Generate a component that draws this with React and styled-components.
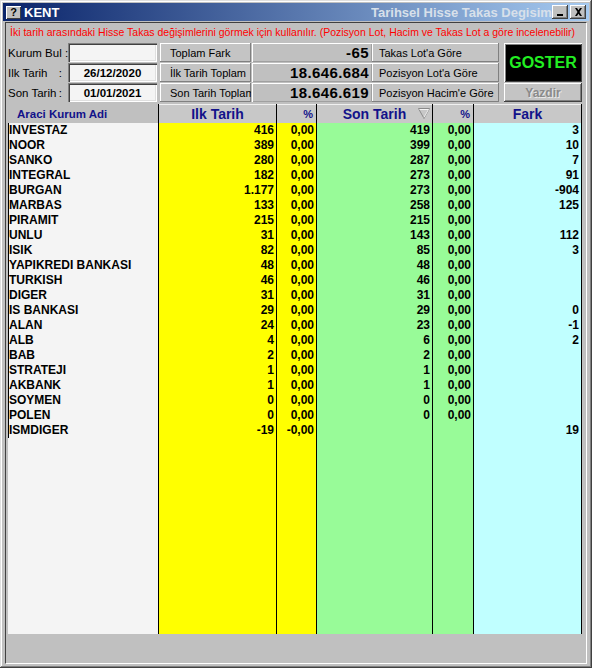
import React from 'react';
import styled, { createGlobalStyle } from 'styled-components';

const GlobalStyle = createGlobalStyle`
  html, body { margin: 0; padding: 0; background: #c0c0c0; }
  body { font-family: "Liberation Sans", Arial, sans-serif; }
  * { box-sizing: border-box; }
`;

const raised = 'inset -1px -1px #808080, inset 1px 1px #ffffff';
const sunken = 'inset 1px 1px #808080, inset 2px 2px #404040, inset -1px -1px #ffffff, inset -2px -2px #dfdfdf';

const Window = styled.div`
  width: 592px;
  height: 668px;
  padding: 3px;
  background: #c0c0c0;
  box-shadow: inset -1px -1px #404040, inset 1px 1px #dfdfdf, inset -2px -2px #808080, inset 2px 2px #ffffff;
  display: flex;
  flex-direction: column;
  overflow: hidden;
`;

const TitleBar = styled.div`
  height: 18px;
  flex: none;
  background: linear-gradient(to right, #0a246a, #a6caf0);
  display: flex;
  align-items: center;
  padding: 0 3px 0 3px;
  margin-bottom: 1px;
`;

const TitleIcon = styled.span`
  width: 15px;
  height: 13px;
  background: #c0c0c0;
  box-shadow: inset 1px 1px #ffffff, inset -1px -1px #404040;
  display: flex;
  align-items: center;
  justify-content: center;
  font: bold 11px "Liberation Sans", Arial, sans-serif;
  color: #000;
`;

const Caption = styled.span`
  margin-left: 3px;
  color: #ffffff;
  font: bold 13px "Liberation Sans", Arial, sans-serif;
`;

const SubCaption = styled.span`
  margin-left: auto;
  width: 181px;
  overflow: hidden;
  white-space: nowrap;
  color: #d8e0ea;
  font: bold 13px "Liberation Sans", Arial, sans-serif;
`;

const CapButton = styled.span`
  width: 16px;
  height: 14px;
  margin-left: ${p => p.$gap || 0}px;
  background: #c0c0c0;
  box-shadow: inset -1px -1px #404040, inset 1px 1px #ffffff, inset -2px -2px #808080;
  display: flex;
  align-items: center;
  justify-content: center;
`;

const Client = styled.div`
  flex: 1;
  display: flex;
  flex-direction: column;
  margin: 0 2px 1px 2px;
  border-style: solid;
  border-width: 1px;
  border-color: #404040 #ffffff #ffffff #404040;
  padding: 0 3px 0 2px;
`;

const Notice = styled.div`
  height: 20px;
  line-height: 19px;
  padding-left: 2px;
  color: #ff0000;
  font-size: 10.5px;
  white-space: nowrap;
  overflow: hidden;
`;

const Controls = styled.div`
  display: grid;
  grid-template-columns: 60px 92px 92px 120px 128px 82px;
  grid-template-rows: repeat(3, 19px);
  row-gap: 1px;
`;

const Label = styled.div`
  display: flex;
  align-items: center;
  justify-content: space-between;
  width: ${p => p.$w}px;
  font-size: 11.5px;
  color: #000;
  white-space: nowrap;
`;

const Input = styled.div`
  width: 89px;
  height: 19px;
  background: #f4f4f4;
  box-shadow: ${sunken};
  display: flex;
  align-items: center;
  justify-content: center;
  font: bold 11.5px "Liberation Sans", Arial, sans-serif;
  padding-top: 1px;
`;

const Button = styled.div`
  width: ${p => p.$w}px;
  height: 19px;
  background: #c4c4c4;
  box-shadow: ${raised};
  display: flex;
  align-items: center;
  padding-left: ${p => p.$pl}px;
  font-size: 11px;
  color: #000;
  white-space: nowrap;
  overflow: hidden;
`;

const Value = styled.div`
  height: 19px;
  background: #c0c0c0;
  box-shadow: inset 1px 1px #ffffff, inset -1px -1px #a0a0a0;
  display: flex;
  align-items: center;
  justify-content: flex-end;
  padding-right: 3px;
  font: bold 15px "Liberation Sans", Arial, sans-serif;
  letter-spacing: 0.4px;
  color: #000;
`;

const GoButton = styled.div`
  grid-column: 6;
  grid-row: 1 / span 2;
  margin-left: 4px;
  background: #000;
  box-shadow: inset 1px 1px #ffffff, inset -1px -1px #404040, inset 2px 2px #808080;
  display: flex;
  align-items: center;
  justify-content: center;
  color: #22ee22;
  font: bold 16px "Liberation Sans", Arial, sans-serif;
`;

const PrintButton = styled.div`
  grid-column: 6;
  grid-row: 3;
  margin-left: 4px;
  background: #c4c4c4;
  box-shadow: inset -1px -1px #404040, inset 1px 1px #ffffff, inset -2px -2px #808080;
  display: flex;
  align-items: center;
  justify-content: center;
  color: #8a8a8a;
  font: bold 12px "Liberation Sans", Arial, sans-serif;
  text-shadow: 1px 1px #e8e8e8;
`;

const Grid = styled.div`
  margin-top: 2px;
  display: flex;
  flex-direction: column;
`;

const HeaderRow = styled.div`
  display: flex;
  height: 19px;
`;

const HeaderCell = styled.div`
  position: relative;
  width: ${p => p.$w}px;
  flex: none;
  border-right: 1px solid #000;
  background: ${p => (p.$flat ? '#c0c0c0' : '#c8c8c8')};
  box-shadow: ${p => (p.$flat ? 'none' : 'inset 0 1px #f0f0f0')};
  display: flex;
  align-items: center;
  justify-content: ${p => p.$justify};
  padding: ${p => p.$pad};
  color: #12128a;
  font: bold ${p => p.$fs}px "Liberation Sans", Arial, sans-serif;
  white-space: nowrap;
`;

const SortMark = styled.svg`
  position: absolute;
  right: 2px;
  top: 3px;
`;

const Body = styled.div`
  display: flex;
  height: 511px;
`;

const Column = styled.div`
  width: ${p => p.$w}px;
  flex: none;
  background: ${p => p.$bg};
  border-right: 1px solid #000;
  display: flex;
  flex-direction: column;
`;

const Cell = styled.div`
  height: 15px;
  line-height: 15px;
  padding: ${p => (p.$left ? '0 0 0 1px' : '0 2px 0 0')};
  text-align: ${p => (p.$left ? 'left' : 'right')};
  box-shadow: ${p => (p.$left ? 'inset 1px 0 #000' : 'none')};
  font: bold 12px "Liberation Sans", Arial, sans-serif;
  color: #000;
  white-space: nowrap;
  overflow: hidden;
`;

const cols = [
  { key: 'name', w: 151, bg: '#f4f4f4', title: 'Araci Kurum Adi', flat: true, justify: 'flex-start', pad: '0 0 0 9px', fs: 11.5 },
  { key: 'ilk', w: 118, bg: '#ffff00', title: 'Ilk Tarih', justify: 'center', pad: '0', fs: 14 },
  { key: 'p1', w: 40, bg: '#ffff00', title: '%', justify: 'flex-end', pad: '0 3px 0 0', fs: 11 },
  { key: 'son', w: 116, bg: '#98fb98', title: 'Son Tarih', sort: true, justify: 'center', pad: '0', fs: 14 },
  { key: 'p2', w: 41, bg: '#98fb98', title: '%', justify: 'flex-end', pad: '0 3px 0 0', fs: 11 },
  { key: 'fark', w: 108, bg: '#c0ffff', title: 'Fark', justify: 'center', pad: '0', fs: 14 },
];

const rows = [
  ['INVESTAZ', '416', '0,00', '419', '0,00', '3'],
  ['NOOR', '389', '0,00', '399', '0,00', '10'],
  ['SANKO', '280', '0,00', '287', '0,00', '7'],
  ['INTEGRAL', '182', '0,00', '273', '0,00', '91'],
  ['BURGAN', '1.177', '0,00', '273', '0,00', '-904'],
  ['MARBAS', '133', '0,00', '258', '0,00', '125'],
  ['PIRAMIT', '215', '0,00', '215', '0,00', ''],
  ['UNLU', '31', '0,00', '143', '0,00', '112'],
  ['ISIK', '82', '0,00', '85', '0,00', '3'],
  ['YAPIKREDI BANKASI', '48', '0,00', '48', '0,00', ''],
  ['TURKISH', '46', '0,00', '46', '0,00', ''],
  ['DIGER', '31', '0,00', '31', '0,00', ''],
  ['IS BANKASI', '29', '0,00', '29', '0,00', '0'],
  ['ALAN', '24', '0,00', '23', '0,00', '-1'],
  ['ALB', '4', '0,00', '6', '0,00', '2'],
  ['BAB', '2', '0,00', '2', '0,00', ''],
  ['STRATEJI', '1', '0,00', '1', '0,00', ''],
  ['AKBANK', '1', '0,00', '1', '0,00', ''],
  ['SOYMEN', '0', '0,00', '0', '0,00', ''],
  ['POLEN', '0', '0,00', '0', '0,00', ''],
  ['ISMDIGER', '-19', '-0,00', '', '', '19'],
];

export default function App() {
  return (
    <>
      <GlobalStyle />
      <Window>
        <TitleBar>
          <TitleIcon>?</TitleIcon>
          <Caption>KENT</Caption>
          <SubCaption>Tarihsel Hisse Takas Degisimleri</SubCaption>
          <CapButton>
            <svg width="8" height="8" viewBox="0 0 8 8"><rect x="1" y="6" width="6" height="2" fill="#000" /></svg>
          </CapButton>
          <CapButton $gap={2}>
            <svg width="9" height="8" viewBox="0 0 9 8">
              <path d="M1 0h2l1.5 2.2L6 0h2L5.5 4 8 8H6L4.5 5.8 3 8H1l2.5-4z" fill="#000" />
            </svg>
          </CapButton>
        </TitleBar>
        <Client>
          <Notice>İki tarih arasındaki Hisse Takas değişimlerini görmek için kullanılır. (Pozisyon Lot, Hacim ve Takas Lot a göre incelenebilir)</Notice>
          <Controls>
            <Label $w={58}>Kurum Bul :</Label>
            <Input />
            <Button $w={91} $pl={10}>Toplam Fark</Button>
            <Value>-65</Value>
            <Button $w={127} $pl={7}>Takas Lot'a Göre</Button>
            <GoButton>GOSTER</GoButton>

            <Label $w={54}><span>Ilk Tarih</span><span>:</span></Label>
            <Input>26/12/2020</Input>
            <Button $w={91} $pl={10}>İlk Tarih Toplam</Button>
            <Value>18.646.684</Value>
            <Button $w={127} $pl={7}>Pozisyon Lot'a Göre</Button>

            <Label $w={54}><span>Son Tarih</span><span>:</span></Label>
            <Input>01/01/2021</Input>
            <Button $w={91} $pl={10}>Son Tarih Toplam</Button>
            <Value>18.646.619</Value>
            <Button $w={127} $pl={7}>Pozisyon Hacim'e Göre</Button>
            <PrintButton>Yazdir</PrintButton>
          </Controls>
          <Grid>
            <HeaderRow>
              {cols.map(c => (
                <HeaderCell key={c.key} $w={c.w} $flat={c.flat} $justify={c.justify} $pad={c.pad} $fs={c.fs}>
                  {c.title}
                  {c.sort && (
                    <SortMark width="12" height="12" viewBox="0 0 12 12">
                      <path d="M0.5 1.5h11L6 11.5z" fill="none" stroke="#8a8a8a" />
                      <path d="M1.5 2.5h9L6 10.5" fill="none" stroke="#ffffff" strokeWidth="0.8" />
                    </SortMark>
                  )}
                </HeaderCell>
              ))}
            </HeaderRow>
            <Body>
              {cols.map((c, ci) => (
                <Column key={c.key} $w={c.w} $bg={c.bg}>
                  {rows.map((r, ri) => (
                    <Cell key={ri} $left={ci === 0}>{r[ci]}</Cell>
                  ))}
                </Column>
              ))}
            </Body>
          </Grid>
        </Client>
      </Window>
    </>
  );
}
